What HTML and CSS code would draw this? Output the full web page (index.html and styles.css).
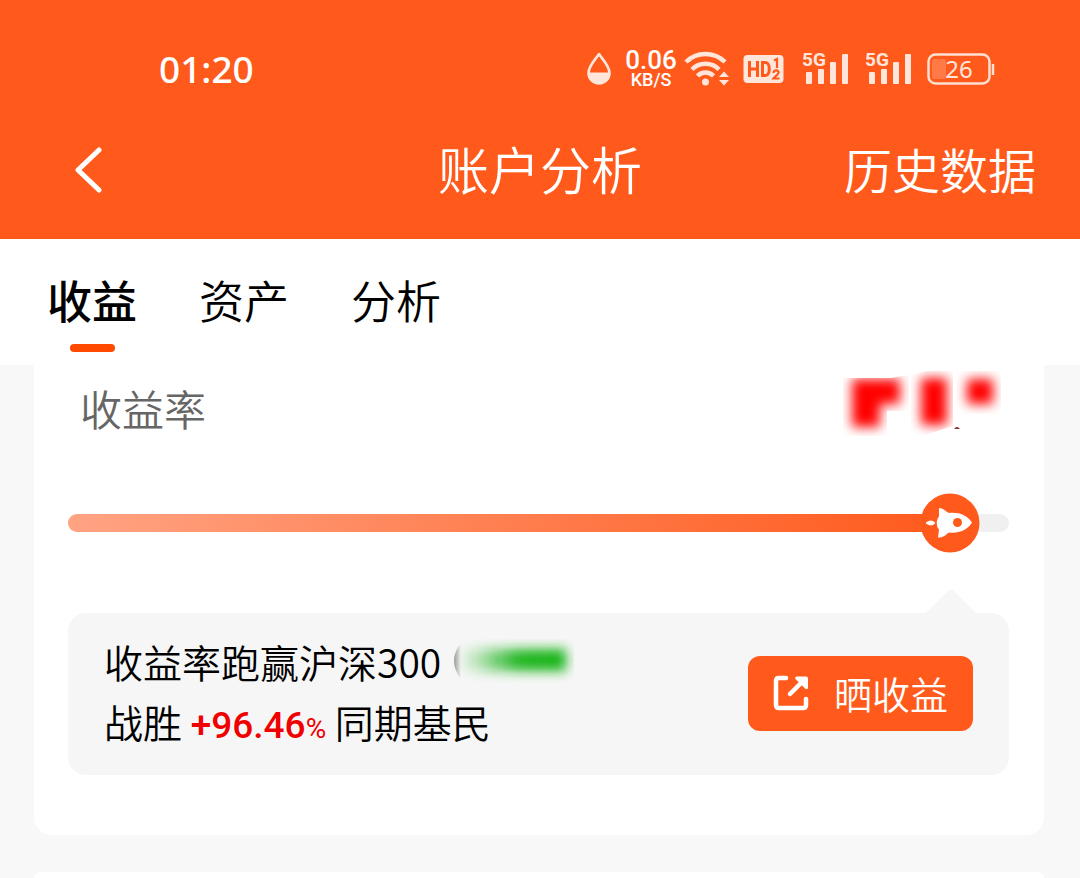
FILE: index.html
```html
<!DOCTYPE html>
<html lang="zh-CN">
<head>
<meta charset="utf-8">
<meta name="viewport" content="width=device-width, initial-scale=1">
<title>账户分析</title>
<link rel="stylesheet" href="styles.css">
</head>
<body>
<header class="header">
  <div class="status">
    <time class="clock">01:20</time>
    <div class="indicators">
      <svg class="drop" width="26" height="34" viewBox="0 0 26 34"><path d="M13 2C9 8 2.500 14 2.500 21a10.500 10.500 0 0 0 21 0C23.500 14 17 8 13 2z" fill="none" stroke="#ffe5da" stroke-width="2.600" stroke-linejoin="round"/><path d="M2 20.500h22a11 11 0 0 1-22 0z" fill="#ffe5da"/></svg>
      <div class="speed"><span class="rate">0.06</span><span class="unit">KB/S</span></div>
      <svg class="wifi" width="46" height="36" viewBox="0 0 46 36"><g fill="none" stroke="#ffe5da" stroke-width="4.500"><path d="M2 11a27.500 27.500 0 0 1 39 0"/><path d="M8 18.500a19 19 0 0 1 27 0"/><path d="M13.500 25a11 11 0 0 1 16 0"/></g><circle cx="21.500" cy="31" r="3.500" fill="#ffe5da"/><path d="M35 26l5-5.500 5 5.500zM35 29h10l-5 5.500z" fill="#ffe5da"/></svg>
      <svg class="hd" width="41" height="30" viewBox="0 0 41 30"><rect x="0.500" y="1" width="40" height="28" rx="4" fill="#ffe5da"/><g fill="none" stroke="#ff5a1c" stroke-width="3"><path d="M6.500 7v16M14.500 7v16M6.500 15h8M19.500 8.500v13h3c5 0 5-13 0-13z"/><path stroke-width="2.200" d="M31 6.500l3-1.500v9M30.500 19c0-4 6-3 5 0-.5 1.500-3 3-5 5.500h6"/></g></svg>
      <svg class="signal" width="48" height="46" viewBox="0 -6 48 46"><text x="0" y="14" class="net">5G</text><g fill="#ffe5da"><rect x="4" y="20" width="6" height="12" rx="1"/><rect x="16" y="17" width="6" height="15" rx="1"/><rect x="28" y="10" width="6" height="22" rx="1"/><rect x="40" y="2" width="6" height="30" rx="1"/></g></svg>
      <svg class="signal" width="48" height="46" viewBox="0 -6 48 46"><text x="0" y="14" class="net">5G</text><g fill="#ffe5da"><rect x="4" y="20" width="6" height="12" rx="1"/><rect x="16" y="17" width="6" height="15" rx="1"/><rect x="28" y="10" width="6" height="22" rx="1"/><rect x="40" y="2" width="6" height="30" rx="1"/></g></svg>
      <svg class="battery" width="68" height="40" viewBox="0 -4 68 40"><rect x="1.500" y="1.500" width="61" height="29" rx="7" fill="none" stroke="#ffe0d2" stroke-width="2.500"/><rect x="5" y="6" width="14" height="20" rx="2" fill="#ff7a47"/><path d="M66 11v11" stroke="#ffe0d2" stroke-width="2.500"/><text x="32" y="25" text-anchor="middle" class="level">26</text></svg>
    </div>
  </div>
  <nav class="navbar">
    <button class="back" type="button" aria-label="返回"><svg width="30" height="46" viewBox="0 0 30 46"><path d="M25 3L4 23l21 20" fill="none" stroke="#fff" stroke-width="5" stroke-linecap="round" stroke-linejoin="round"/></svg></button>
    <h1 class="title">账户分析</h1>
    <a class="history" href="#history">历史数据</a>
  </nav>
</header>
<nav class="tabs">
  <a class="tab active" href="#income">收益</a>
  <a class="tab" href="#assets">资产</a>
  <a class="tab" href="#analysis">分析</a>
</nav>
<main class="content">
  <section class="card">
    <div class="row">
      <h2 class="label">收益率</h2>
      <svg class="masked" width="160" height="68" viewBox="0 0 160 68" aria-hidden="true">
        <defs>
          <filter id="soft" x="-100%" y="-100%" width="300%" height="300%"><feGaussianBlur stdDeviation="6"/></filter>
          <clipPath id="c1"><path d="M2 7h48l18-3v36H46v25H2z"/></clipPath>
          <clipPath id="c2"><path d="M70 4l20-5h22v56l-28 9H70z"/></clipPath>
          <clipPath id="c3"><path d="M115 0h45v43h-45z"/></clipPath>
        </defs>
        <g clip-path="url(#c1)"><path d="M11 8h48v25H39v23H11z" fill="#f00" filter="url(#soft)"/></g>
        <g clip-path="url(#c2)"><path d="M80 7h26v47H80z" fill="#f00" filter="url(#soft)"/></g>
        <g clip-path="url(#c3)"><path d="M126 8h26v25h-26z" fill="#f00" filter="url(#soft)"/></g>
        <path d="M113 58q3-4 6 0z" fill="#8d3034"/>
      </svg>
    </div>
    <div class="gauge">
      <progress class="bar" value="93.7" max="100" aria-label="收益率排名"></progress>
      <svg class="rocket" width="60" height="60" viewBox="0 0 60 60"><circle cx="30" cy="30" r="29.500" fill="#ff5a1c"/><path fill="#fff" d="M6 30q5-4 9 0-4 4-9 0z" stroke="#fff"/><path fill="#fff" d="M19 15c4 0 6 3 10 5 10-1 18 2 23 9.500-5 8-13 11-23 10-4 3-6 5-11 5l1-8c-3-3-3-10 0-13z"/><circle cx="37.500" cy="29.500" r="4.500" fill="#ff5a1c"/></svg>
    </div>
    <div class="summary">
      <svg class="pointer" width="50" height="24" viewBox="0 0 50 24"><path d="M0 24L22 2q3-3 6 0l22 22z" fill="#f6f6f6"/></svg>
      <div class="lines">
        <p class="line">收益率跑赢沪深300<svg class="hidden-value" width="126" height="44" viewBox="0 0 126 44" aria-hidden="true">
          <defs>
            <linearGradient id="g"><stop offset="0" stop-color="#18b418" stop-opacity="0"/><stop offset=".55" stop-color="#18b418" stop-opacity=".95"/><stop offset="1" stop-color="#18b418"/></linearGradient>
            <linearGradient id="k"><stop offset="0" stop-color="#999"/><stop offset="1" stop-color="#f6f6f6"/></linearGradient>
            <filter id="haze" x="-20%" y="-90%" width="140%" height="280%"><feGaussianBlur stdDeviation="6"/></filter>
          </defs>
          <path d="M13 4Q-1 22 13 40z" fill="url(#k)"/><rect x="12" y="10" width="106" height="22" fill="url(#g)" filter="url(#haze)"/></svg></p>
        <p class="line second">战胜 <strong class="beat">+96.46<span class="percent">%</span></strong> 同期基民</p>
      </div>
      <button class="share" type="button"><svg width="36" height="36" viewBox="0 0 36 36"><g fill="none" stroke="#fff" stroke-width="4.500" stroke-linecap="round" stroke-linejoin="round"><path d="M13 3H6Q3 3 3 6v24q0 3 3 3h24q3 0 3-3v-6"/><path d="M17 19L30 6"/></g><path d="M22 3.500q0-2 2-2h9q2 0 2 2v9q0 3-3 1z" fill="#fff"/></svg>晒收益</button>
    </div>
  </section>
  <section class="card next"></section>
</main>
</body>
</html>
```
FILE: styles.css
```css
* { box-sizing: border-box; }
body {
  margin: 0;
  background: #f8f8f8;
  color: #000;
  font-family: "Noto Sans CJK SC DemiLight", "Noto Sans CJK SC", sans-serif;
  font-weight: 350;
}
h1, h2, p { margin: 0; font-weight: inherit; }
a { color: inherit; text-decoration: none; }
button { border: 0; padding: 0; font: inherit; color: inherit; background: none; cursor: pointer; }
svg { display: block; flex: none; }

.header { background: #ff5a1c; color: #fff; padding-bottom: 37px; }
.status {
  display: flex;
  align-items: center;
  justify-content: space-between;
  height: 138px;
  padding: 0 85px 0 159px;
}
.clock { padding-bottom: 2px; font: 500 37px/1 "Noto Sans", sans-serif; }
.indicators { display: flex; align-items: center; }
.speed {
  display: flex;
  flex-direction: column;
  align-items: center;
  width: 56px;
  margin: 0 5px 0 11px;
  font-family: "Roboto", sans-serif;
  font-weight: 500;
}
.rate { font-size: 26px; line-height: 21px; }
.unit { font-size: 18px; line-height: 18px; }
.hd { margin: 0 18px 0 13px; }
.signal { margin-right: 15px; }
.signal + .signal { margin-right: 14px; }
.net { font: 700 19px "Roboto", sans-serif; fill: #ffe5da; }
.level { font: 400 24px "Noto Sans", sans-serif; fill: #ffe5da; }

.navbar {
  display: grid;
  grid-template-columns: 1fr auto 1fr;
  align-items: center;
  height: 64px;
  padding: 0 44px;
}
.back { justify-self: start; margin-left: 30px; }
.title { padding-bottom: 4px; font-size: 51px; line-height: 60px; }
.history { justify-self: end; padding-bottom: 4px; font-size: 48px; line-height: 60px; }

.tabs {
  display: flex;
  gap: 62px;
  height: 126px;
  padding: 29px 47px 13px;
  background: #fff;
  font-size: 45px;
  line-height: 64px;
}
.tab { display: flex; flex-direction: column; justify-content: space-between; align-items: center; }
.tab.active { font-family: "Noto Sans CJK SC", sans-serif; font-weight: 500; }
.tab.active::after { content: ""; width: 45px; height: 8px; border-radius: 4px; background: #ff4a00; }

.content { padding: 0 36px 0 34px; }
.card { background: #fff; border-radius: 0 0 18px 18px; padding: 0 35px 60px 34px; }
.row { display: flex; justify-content: space-between; padding: 6px 8px 0 12px; }
.label { padding-bottom: 7px; padding-top: 5px; font-size: 42px; line-height: 64px; color: #666; }
.gauge { position: relative; padding-top: 67px; }
.bar {
  display: block;
  width: 100%;
  height: 18px;
  border: 0;
  border-radius: 9px;
  overflow: hidden;
  appearance: none;
  background: #f0f0f0;
}
.bar::-webkit-progress-bar { background: #f0f0f0; }
.bar::-webkit-progress-value { background: linear-gradient(90deg, #ffa383, #ff5a1c); }
.rocket { position: absolute; left: 93.7%; bottom: -21px; margin-left: -30px; }
.summary {
  position: relative;
  display: flex;
  align-items: center;
  justify-content: space-between;
  margin-top: 81px;
  padding: 18px 36px 24px;
  border-radius: 18px;
  background: #f6f6f6;
}
.pointer { position: absolute; left: 93.7%; top: -24px; margin-left: -24px; }
.line { display: flex; align-items: center; height: 60px; white-space: pre; font-size: 39px; line-height: 60px; }
.second { display: block; }
.hidden-value { margin-left: 7px; }
.beat { font-family: "Roboto", sans-serif; font-weight: 500; font-size: 37px; line-height: 1; color: #f00000; }
.percent { font-weight: 400; font-size: 28px; }
.share {
  display: flex;
  align-items: center;
  justify-content: center;
  gap: 25px;
  width: 225px;
  height: 75px;
  margin-top: 4px;
  border-radius: 12px;
  background: #ff5a1c;
  color: #fff;
  font-size: 38px;
  line-height: 64px;
}
.next { margin-top: 37px; padding-bottom: 6px; border-radius: 18px 18px 0 0; }
```
